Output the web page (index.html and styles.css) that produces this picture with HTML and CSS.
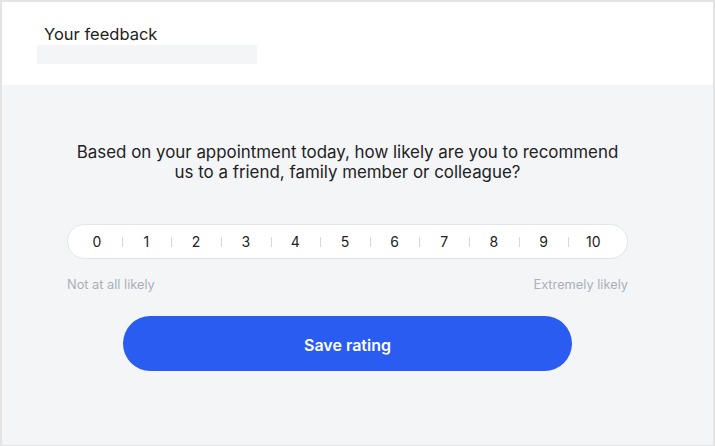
FILE: index.html
```html
<!DOCTYPE html>
<html lang="en">
<head>
<meta charset="utf-8">
<title>Your feedback</title>
<link rel="stylesheet" href="styles.css">
</head>
<body>
<div class="card">
  <header class="card-header">
    <h1 class="title">Your feedback</h1>
    <div class="placeholder"></div>
  </header>
  <main class="card-body">
    <p class="question">Based on your appointment today, how likely are you to recommend<br>us to a friend, family member or colleague?</p>
    <div class="scale-wrap">
      <div class="scale">
        <span class="cell">0</span>
        <span class="cell">1</span>
        <span class="cell">2</span>
        <span class="cell">3</span>
        <span class="cell">4</span>
        <span class="cell">5</span>
        <span class="cell">6</span>
        <span class="cell">7</span>
        <span class="cell">8</span>
        <span class="cell">9</span>
        <span class="cell">10</span>
      </div>
      <div class="labels">
        <span>Not at all likely</span>
        <span>Extremely likely</span>
      </div>
    </div>
    <button class="save">Save rating</button>
  </main>
</div>
</body>
</html>
```

FILE: styles.css
```css
* { box-sizing: border-box; }
html, body { margin: 0; height: 100%; }
body {
  background: #e4e4e4;
  padding: 2px 2px 1px 2px;
  font-family: Inter, "Liberation Sans", Arial, sans-serif;
  color: #222;
}
.card {
  height: 100%;
  display: flex;
  flex-direction: column;
  background: #f4f5f7;
}
.card-header {
  background: #fff;
  height: 83px;
  padding: 22px 0 0 35px;
}
.title {
  margin: 0 0 1px 7px;
  font-size: 16.5px;
  font-weight: 400;
  line-height: 20px;
  color: #222;
}
.placeholder {
  width: 220px;
  height: 19px;
  background: #f4f5f7;
}
.card-body {
  flex: 1;
  display: flex;
  flex-direction: column;
  align-items: center;
  padding: 57px 20px 0 0;
}
.question {
  margin: 0;
  text-align: center;
  font-size: 16.9px;
  line-height: 20px;
  color: #222;
}
.scale-wrap {
  margin-top: 42px;
  width: 561px;
}
.scale {
  height: 35px;
  background: #fff;
  border: 1px solid #e2e5e9;
  border-radius: 18px;
  display: flex;
  align-items: center;
  padding: 0 9px 0 4px;
}
.cell {
  flex: 1;
  text-align: center;
  font-size: 14px;
  line-height: 16px;
  position: relative;
}
.cell + .cell::before {
  content: "";
  position: absolute;
  left: 0;
  top: 3px;
  width: 1px;
  height: 10px;
  background: #d6d9dd;
}
.labels {
  display: flex;
  justify-content: space-between;
  margin-top: 19px;
  font-size: 12.8px;
  line-height: 14px;
  color: #a9b0b8;
}
.save {
  margin-top: 24px;
  width: 449px;
  height: 55px;
  border: none;
  border-radius: 28px;
  background: #2b5cf1;
  color: #fff;
  font-family: inherit;
  font-size: 16px;
  font-weight: 600;
  padding-top: 3px;
}
```
